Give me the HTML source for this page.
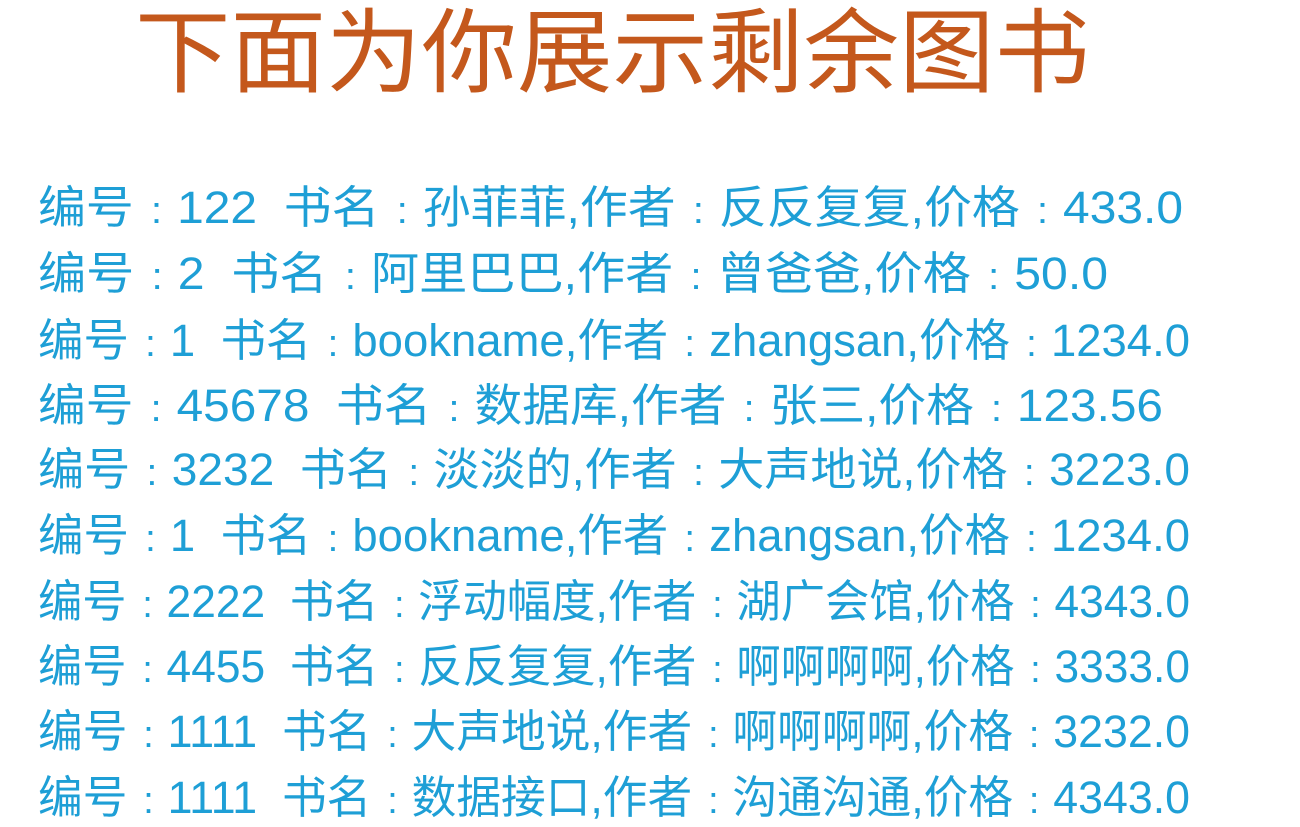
<!DOCTYPE html>
<html><head><meta charset="utf-8"><style>
html,body{margin:0;padding:0;background:#fff;width:1300px;height:827px;overflow:hidden;position:relative}
.t{position:absolute;white-space:pre;transform-origin:0 0;line-height:1}
.title{font-family:"Liberation Sans","Noto Sans CJK SC",sans-serif;color:#c4581c;font-size:92px;left:135px;top:8px}
.r{font-family:"Liberation Sans","Noto Sans CJK SC",sans-serif;color:#1e9fd6;font-size:45px;left:38px}
.c{display:inline-block;margin:0 14px 0 16px;font-size:38px}
</style></head><body>
<div class="t title" data-w="955">下面为你展示剩余图书</div>
<div class="t r" style="top:185px" data-w="1145">编号<span class="c">:</span>122  书名<span class="c">:</span>孙菲菲,作者<span class="c">:</span>反反复复,价格<span class="c">:</span>433.0</div>
<div class="t r" style="top:251px" data-w="1070">编号<span class="c">:</span>2  书名<span class="c">:</span>阿里巴巴,作者<span class="c">:</span>曾爸爸,价格<span class="c">:</span>50.0</div>
<div class="t r" style="top:318px" data-w="1152">编号<span class="c">:</span>1  书名<span class="c">:</span>bookname,作者<span class="c">:</span>zhangsan,价格<span class="c">:</span>1234.0</div>
<div class="t r" style="top:383px" data-w="1125">编号<span class="c">:</span>45678  书名<span class="c">:</span>数据库,作者<span class="c">:</span>张三,价格<span class="c">:</span>123.56</div>
<div class="t r" style="top:447px" data-w="1152">编号<span class="c">:</span>3232  书名<span class="c">:</span>淡淡的,作者<span class="c">:</span>大声地说,价格<span class="c">:</span>3223.0</div>
<div class="t r" style="top:513px" data-w="1152">编号<span class="c">:</span>1  书名<span class="c">:</span>bookname,作者<span class="c">:</span>zhangsan,价格<span class="c">:</span>1234.0</div>
<div class="t r" style="top:579px" data-w="1152">编号<span class="c">:</span>2222  书名<span class="c">:</span>浮动幅度,作者<span class="c">:</span>湖广会馆,价格<span class="c">:</span>4343.0</div>
<div class="t r" style="top:644px" data-w="1152">编号<span class="c">:</span>4455  书名<span class="c">:</span>反反复复,作者<span class="c">:</span>啊啊啊啊,价格<span class="c">:</span>3333.0</div>
<div class="t r" style="top:709px" data-w="1152">编号<span class="c">:</span>1111  书名<span class="c">:</span>大声地说,作者<span class="c">:</span>啊啊啊啊,价格<span class="c">:</span>3232.0</div>
<div class="t r" style="top:775px" data-w="1152">编号<span class="c">:</span>1111  书名<span class="c">:</span>数据接口,作者<span class="c">:</span>沟通沟通,价格<span class="c">:</span>4343.0</div>
<script>
document.querySelectorAll('.t').forEach(function(e){
  var w=+e.getAttribute('data-w');var a=e.getBoundingClientRect().width;
  e.style.transform='scaleX('+(w/a)+')';
});
</script>
</body></html>
